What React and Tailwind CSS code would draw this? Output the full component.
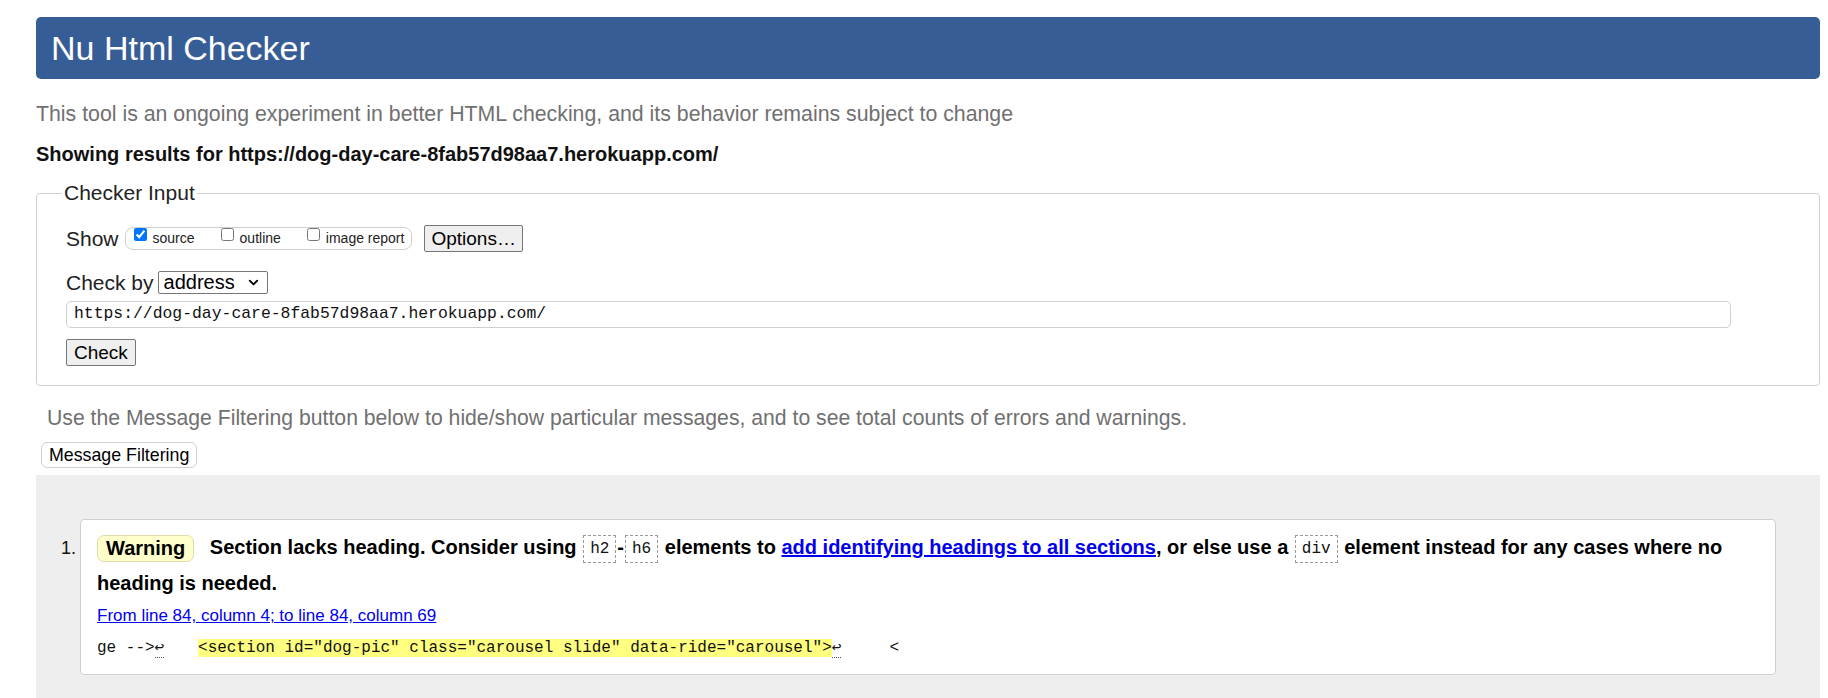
import { ChevronDown } from "lucide-react";

const sans = "font-['Liberation_Sans',Arial,sans-serif]";
const mono = "font-['Liberation_Mono','DejaVu_Sans_Mono',monospace]";

function Code({ children }) {
  return (
    <code
      className={`${mono} mx-[1px] inline-block border border-dashed border-[#9a9a9a] px-[6px] align-middle text-[16px] font-normal leading-[26px] text-[#111]`}
    >
      {children}
    </code>
  );
}

function Option({ label, checked }) {
  return (
    <label className="mr-[26px] inline-flex items-baseline text-[14px] last:mr-0">
      <input
        type="checkbox"
        defaultChecked={checked}
        className="relative -top-[2px] mr-[6px] h-[13px] w-[13px]"
      />
      {label}
    </label>
  );
}

export default function App() {
  return (
    <div className={`${sans} min-h-screen bg-white pl-[36px] pr-[8px] pt-[17px] text-[#111]`}>
      {/* Header */}
      <h1 className="h-[62px] rounded-[5px] bg-[#365d95] px-[15px] text-[34px] leading-[62px] text-white">
        Nu Html Checker
      </h1>

      <p className="mt-[23px] text-[21.3px] leading-[24px] text-[#707070]">
        This tool is an ongoing experiment in better HTML checking, and its behavior remains subject to change
      </p>
      <p className="mt-[16px] text-[20px] font-bold leading-[24px]">
        Showing results for https://dog-day-care-8fab57d98aa7.herokuapp.com/
      </p>

      {/* Checker Input */}
      <fieldset className="mt-[15px] rounded-[4px] border border-[#cfcfcf] px-[29px] pb-[19px]">
        <legend className="-ml-[4px] px-[2px] text-[21px] leading-[24px] text-[#222]">Checker Input</legend>

        <div className="mt-[18px] flex items-center text-[21px] text-[#222]">
          <span>Show</span>
          <div className="ml-[6px] flex h-[23px] items-center rounded-[8px] border border-[#cfcfcf] pl-[8px] pr-[7px]">
            <Option label="source" checked />
            <Option label="outline" />
            <Option label="image report" />
          </div>
          <button className="ml-[12px] h-[27px] rounded-[2px] border border-[#767676] bg-[#efefef] px-[6px] text-[19px] leading-[25px] text-black">
            Options…
          </button>
        </div>

        <div className="mt-[12px] flex items-center text-[21px] text-[#222]">
          <span>Check by</span>
          <div className="ml-[4px] flex h-[23px] w-[110px] items-center justify-between rounded-[2px] border border-[#767676] bg-white pl-[5px] pr-[6px] text-[20px] text-black">
            <span className="leading-[21px]">address</span>
            <ChevronDown size={15} strokeWidth={3} />
          </div>
        </div>

        <div
          className={`${mono} mt-[3px] flex h-[27px] w-[1665px] items-center rounded-[5px] border border-[#cfcfcf] px-[7px] text-[16.4px] text-[#111]`}
        >
          https://dog-day-care-8fab57d98aa7.herokuapp.com/
        </div>

        <button className="mt-[11px] h-[27px] rounded-[2px] border border-[#767676] bg-[#efefef] px-[7px] text-[19px] leading-[25px] text-black">
          Check
        </button>
      </fieldset>

      <p className="ml-[11px] mt-[20px] text-[21.2px] leading-[24px] text-[#707070]">
        Use the Message Filtering button below to hide/show particular messages, and to see total counts of errors and warnings.
      </p>
      <button className="ml-[5px] mt-[12px] h-[26px] rounded-[6px] border border-[#cfcfcf] bg-white px-[7px] text-[17.8px] leading-[24px] text-black">
        Message Filtering
      </button>

      {/* Results */}
      <div className="mt-[7px] bg-[#eeeeee] px-[44px] pb-[60px] pt-[44px]">
        <div className="-ml-[19px] flex items-baseline">
          <span className="w-[19px] shrink-0 text-[18px]">1.</span>
          <div className="flex-1 rounded-[4px] border border-[#cfcfcf] bg-white px-[16px] pb-[16px] pt-[9px]">
            <p className="text-[20px] font-bold leading-[36px] text-black">
              <span className="mr-[10px] inline-block rounded-[7px] border border-[#e0dcaa] bg-[#ffffcc] px-[8px] align-middle leading-[25px]">
                Warning
              </span>{" "}
              Section lacks heading. Consider using <Code>h2</Code>-<Code>h6</Code> elements to{" "}
              <a href="#" className="text-[#0000ee] underline">
                add identifying headings to all sections
              </a>
              , or else use a <Code>div</Code> element instead for any cases where no heading is needed.
            </p>
            <p className="mt-[5px] text-[17px] leading-[20px]">
              <a href="#" className="text-[#0000ee] underline">
                From line 84, column 4; to line 84, column 69
              </a>
            </p>
            <p className={`${mono} mt-[12px] whitespace-pre text-[16px] leading-[20px] text-[#111]`}>
              ge --&gt;<span className="border-b border-dotted border-[#555]">↩</span>
              {"   "}
              <span className="ml-[5px] bg-[#ffff80]">&lt;section id="dog-pic" class="carousel slide" data-ride="carousel"&gt;</span>
              <span className="border-b border-dotted border-[#555]">↩</span>
              {"     <"}
            </p>
          </div>
        </div>
      </div>
    </div>
  );
}
